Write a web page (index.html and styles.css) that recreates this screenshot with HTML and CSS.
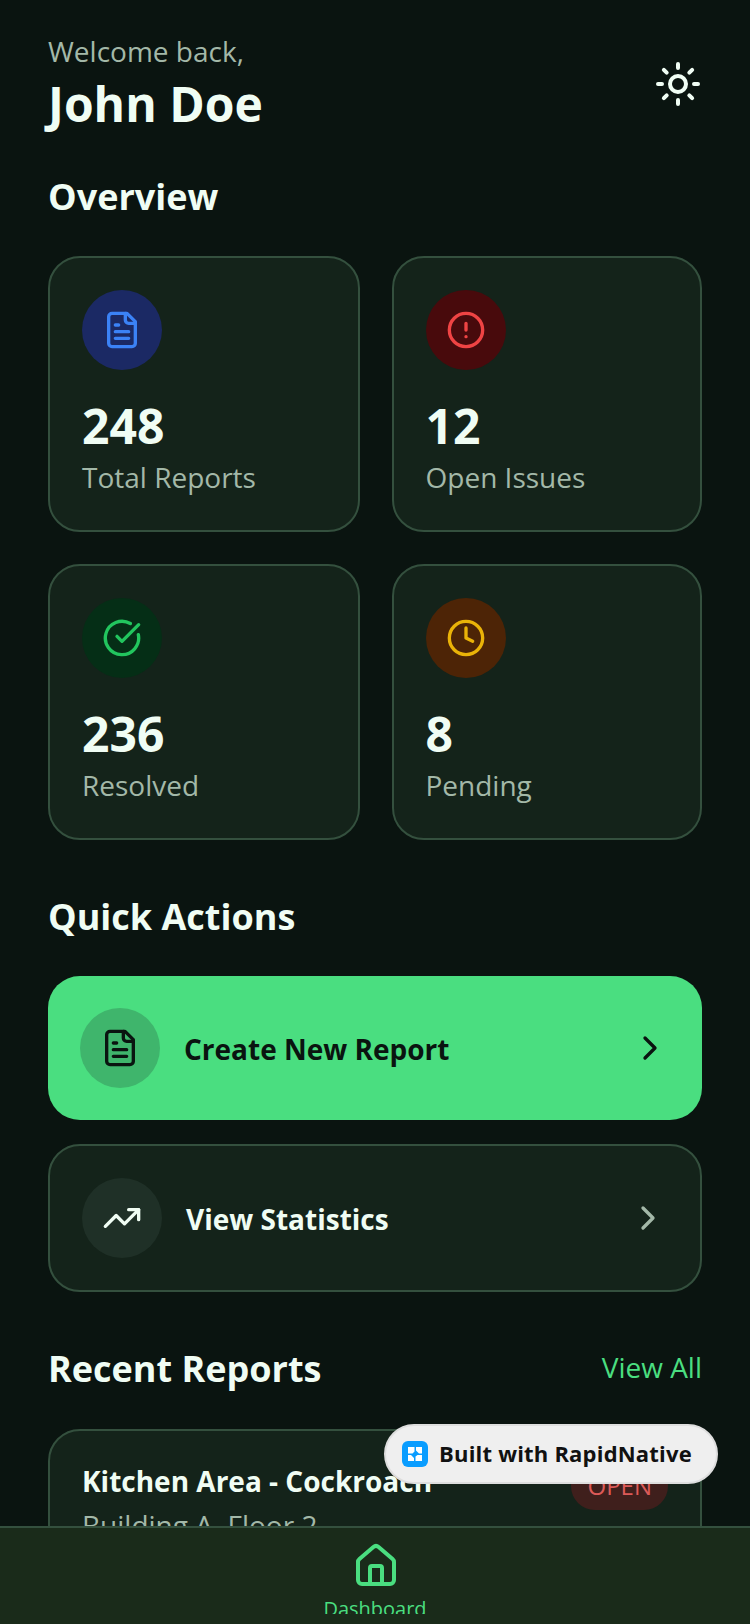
FILE: index.html
```html
<!DOCTYPE html>
<html lang="en">
<head>
  <meta charset="utf-8">
  <meta name="viewport" content="width=device-width">
  <title>Dashboard</title>
  <link rel="stylesheet" href="styles.css">
</head>
<body>
  <div class="screen">
    <main class="content">
      <header class="top">
        <div>
          <p class="welcome">Welcome back,</p>
          <h1 class="name">John Doe</h1>
        </div>
        <svg class="icon sun" viewBox="0 0 24 24">
          <circle cx="12" cy="12" r="4"/>
          <path d="M12 2v2M12 20v2M4.93 4.93l1.41 1.41M17.66 17.66l1.41 1.41M2 12h2M20 12h2M6.34 17.66l-1.41 1.41M19.07 4.93l-1.41 1.41"/>
        </svg>
      </header>

      <h2 class="section-title">Overview</h2>
      <section class="stats">
        <div class="card stat">
          <div class="circle blue">
            <svg class="icon" viewBox="0 0 24 24"><path d="M15 2H6a2 2 0 0 0-2 2v16a2 2 0 0 0 2 2h12a2 2 0 0 0 2-2V7Z"/><path d="M14 2v4a2 2 0 0 0 2 2h4"/><path d="M10 9H8M16 13H8M16 17H8"/></svg>
          </div>
          <div class="stat-num">248</div>
          <div class="stat-label">Total Reports</div>
        </div>
        <div class="card stat">
          <div class="circle red">
            <svg class="icon" viewBox="0 0 24 24"><circle cx="12" cy="12" r="10"/><path d="M12 8v4M12 16h.01"/></svg>
          </div>
          <div class="stat-num">12</div>
          <div class="stat-label">Open Issues</div>
        </div>
        <div class="card stat">
          <div class="circle green">
            <svg class="icon" viewBox="0 0 24 24"><path d="M21.801 10A10 10 0 1 1 17 3.335"/><path d="m9 11 3 3L22 4"/></svg>
          </div>
          <div class="stat-num">236</div>
          <div class="stat-label">Resolved</div>
        </div>
        <div class="card stat">
          <div class="circle amber">
            <svg class="icon" viewBox="0 0 24 24"><circle cx="12" cy="12" r="10"/><path d="M12 6v6l4 2"/></svg>
          </div>
          <div class="stat-num">8</div>
          <div class="stat-label">Pending</div>
        </div>
      </section>

      <h2 class="section-title actions-title">Quick Actions</h2>
      <section class="actions">
        <div class="action primary">
          <div class="circle dark-tint">
            <svg class="icon" viewBox="0 0 24 24"><path d="M15 2H6a2 2 0 0 0-2 2v16a2 2 0 0 0 2 2h12a2 2 0 0 0 2-2V7Z"/><path d="M14 2v4a2 2 0 0 0 2 2h4"/><path d="M10 9H8M16 13H8M16 17H8"/></svg>
          </div>
          <span class="action-text">Create New Report</span>
          <svg class="icon chevron" viewBox="0 0 24 24"><path d="m9 18 6-6-6-6"/></svg>
        </div>
        <div class="action card">
          <div class="circle light-tint">
            <svg class="icon" viewBox="0 0 24 24"><path d="M22 7l-8.5 8.5-5-5L2 17"/><path d="M16 7h6v6"/></svg>
          </div>
          <span class="action-text">View Statistics</span>
          <svg class="icon chevron muted" viewBox="0 0 24 24"><path d="m9 18 6-6-6-6"/></svg>
        </div>
      </section>

      <div class="recent-head">
        <h2 class="section-title">Recent Reports</h2>
        <span class="view-all">View All</span>
      </div>
      <div class="card report">
        <div>
          <div class="report-title">Kitchen Area - Cockroach</div>
          <div class="report-sub">Building A, Floor 2</div>
        </div>
        <span class="status">OPEN</span>
      </div>
    </main>

    <nav class="tabbar">
      <svg class="icon home" viewBox="0 0 24 24"><path d="M15 21v-8a1 1 0 0 0-1-1h-4a1 1 0 0 0-1 1v8"/><path d="M3 10a2 2 0 0 1 .709-1.528l7-5.999a2 2 0 0 1 2.582 0l7 5.999A2 2 0 0 1 21 10v9a2 2 0 0 1-2 2H5a2 2 0 0 1-2-2z"/></svg>
      <div class="tab-label">Dashboard</div>
    </nav>

    <div class="built">
      <svg class="logo" viewBox="0 0 26 26">
        <rect width="26" height="26" rx="6" fill="#0a9dff"/>
        <path d="M6 6h6.5v4.500l-2 2H6zM14 6h6v6.500h-3l-3-3zM6 14h3l3 3v3H6zM13.500 15.500l2-1.500H20v6h-6.500z" fill="#fff"/>
      </svg>
      <span class="built-text">Built with RapidNative</span>
    </div>
  </div>
</body>
</html>
```
FILE: styles.css
```css
* {
  box-sizing: border-box;
}

html, body {
  margin: 0;
  padding: 0;
  background-color: #0a1410;
}

body {
  font-family: "Open Sans", "Noto Sans", sans-serif;
  color: #f0fdf4;
}

.screen {
  position: relative;
  width: 750px;
  height: 1624px;
  display: flex;
  flex-direction: column;
  overflow: hidden;
}

.content {
  flex: 1;
  min-height: 0;
  overflow: hidden;
  padding: 32px 48px 0;
}

.icon {
  width: 40px;
  height: 40px;
  fill: none;
  stroke: currentColor;
  stroke-width: 2;
  stroke-linecap: round;
  stroke-linejoin: round;
  flex-shrink: 0;
}

/* header */
.top {
  display: flex;
  justify-content: space-between;
  align-items: center;
}

.welcome {
  margin: 0;
  font-size: 28px;
  line-height: 38px;
  color: #a3b8a8;
}

.name {
  margin: 2px 0 0;
  font-size: 48px;
  line-height: 64px;
  font-weight: 700;
}

.sun {
  width: 48px;
  height: 48px;
}

.section-title {
  margin: 0;
  font-size: 36px;
  line-height: 48px;
  font-weight: 700;
}

.top + .section-title {
  margin-top: 37px;
}

/* overview cards */
.stats {
  margin-top: 35px;
  display: grid;
  grid-template-columns: 311.5px 310.5px;
  gap: 32px;
}

.card {
  background-color: #14231a;
  border: 2px solid #34503e;
}

.stat {
  height: 276px;
  padding: 32px;
  border-radius: 32px;
}

.circle {
  width: 80px;
  height: 80px;
  border-radius: 50%;
  display: flex;
  align-items: center;
  justify-content: center;
  flex-shrink: 0;
}

.blue { background-color: #1b2964; color: #3b82f6; }
.red { background-color: #480a0c; color: #ef4444; }
.green { background-color: #052e16; color: #22c55e; }
.amber { background-color: #4d2406; color: #eab308; }
.dark-tint { background-color: #3fb56c; color: #0a1410; }
.light-tint { background-color: #1f3027; color: #f0fdf4; }

.stat-num {
  margin-top: 25px;
  font-size: 48px;
  line-height: 62px;
  font-weight: 700;
}

.stat-label {
  font-size: 28px;
  line-height: 40px;
  color: #a3b8a8;
}

/* quick actions */
.actions-title {
  margin-top: 53px;
}

.actions {
  margin-top: 35px;
  display: flex;
  flex-direction: column;
  gap: 24px;
}

.action {
  display: flex;
  align-items: center;
  padding: 32px;
  border-radius: 32px;
}

.primary {
  background-color: #4ade80;
  color: #0a1410;
}

.action-text {
  flex: 1;
  margin: 2px 0 0 24px;
  font-size: 28px;
  line-height: 40px;
  font-weight: 700;
}

.chevron.muted {
  color: #a3b8a8;
}

/* recent reports */
.recent-head {
  margin-top: 53px;
  display: flex;
  justify-content: space-between;
  align-items: center;
}

.view-all {
  margin-bottom: 4px;
  font-size: 28px;
  color: #4ade80;
}

.report {
  margin-top: 36px;
  padding: 30px 32px;
  border-radius: 32px;
  display: flex;
  justify-content: space-between;
  align-items: flex-start;
}

.report-title {
  font-size: 28px;
  line-height: 40px;
  font-weight: 700;
}

.report-sub {
  margin-top: 4px;
  font-size: 28px;
  line-height: 40px;
  color: #a3b8a8;
}

.status {
  padding: 8px 16px;
  border-radius: 24px;
  background-color: #3f1f1c;
  color: #dc5a58;
  font-size: 24px;
}

/* bottom tab */
.tabbar {
  height: 98px;
  flex-shrink: 0;
  overflow: hidden;
  background-color: #1a2b1a;
  border-top: 2px solid #34503e;
  padding-top: 14px;
  display: flex;
  flex-direction: column;
  align-items: center;
}

.home {
  width: 48px;
  height: 48px;
  margin-left: 2px;
  color: #4ade80;
}

.tab-label {
  margin-top: 5px;
  height: 19px;
  overflow: hidden;
  font-size: 20px;
  line-height: 28px;
  color: #4ade80;
}

/* floating badge */
.built {
  position: absolute;
  left: 384px;
  top: 1424px;
  width: 334px;
  height: 60px;
  padding: 0 16px;
  display: flex;
  align-items: center;
  gap: 11px;
  background-color: #efefef;
  border: 2px solid #dedede;
  border-radius: 30px;
  color: #111;
}

.built-text {
  margin-bottom: 2px;
  font-size: 22px;
  font-weight: 700;
  letter-spacing: 0.2px;
  white-space: nowrap;
}

.logo {
  width: 26px;
  height: 26px;
  flex-shrink: 0;
}
```
